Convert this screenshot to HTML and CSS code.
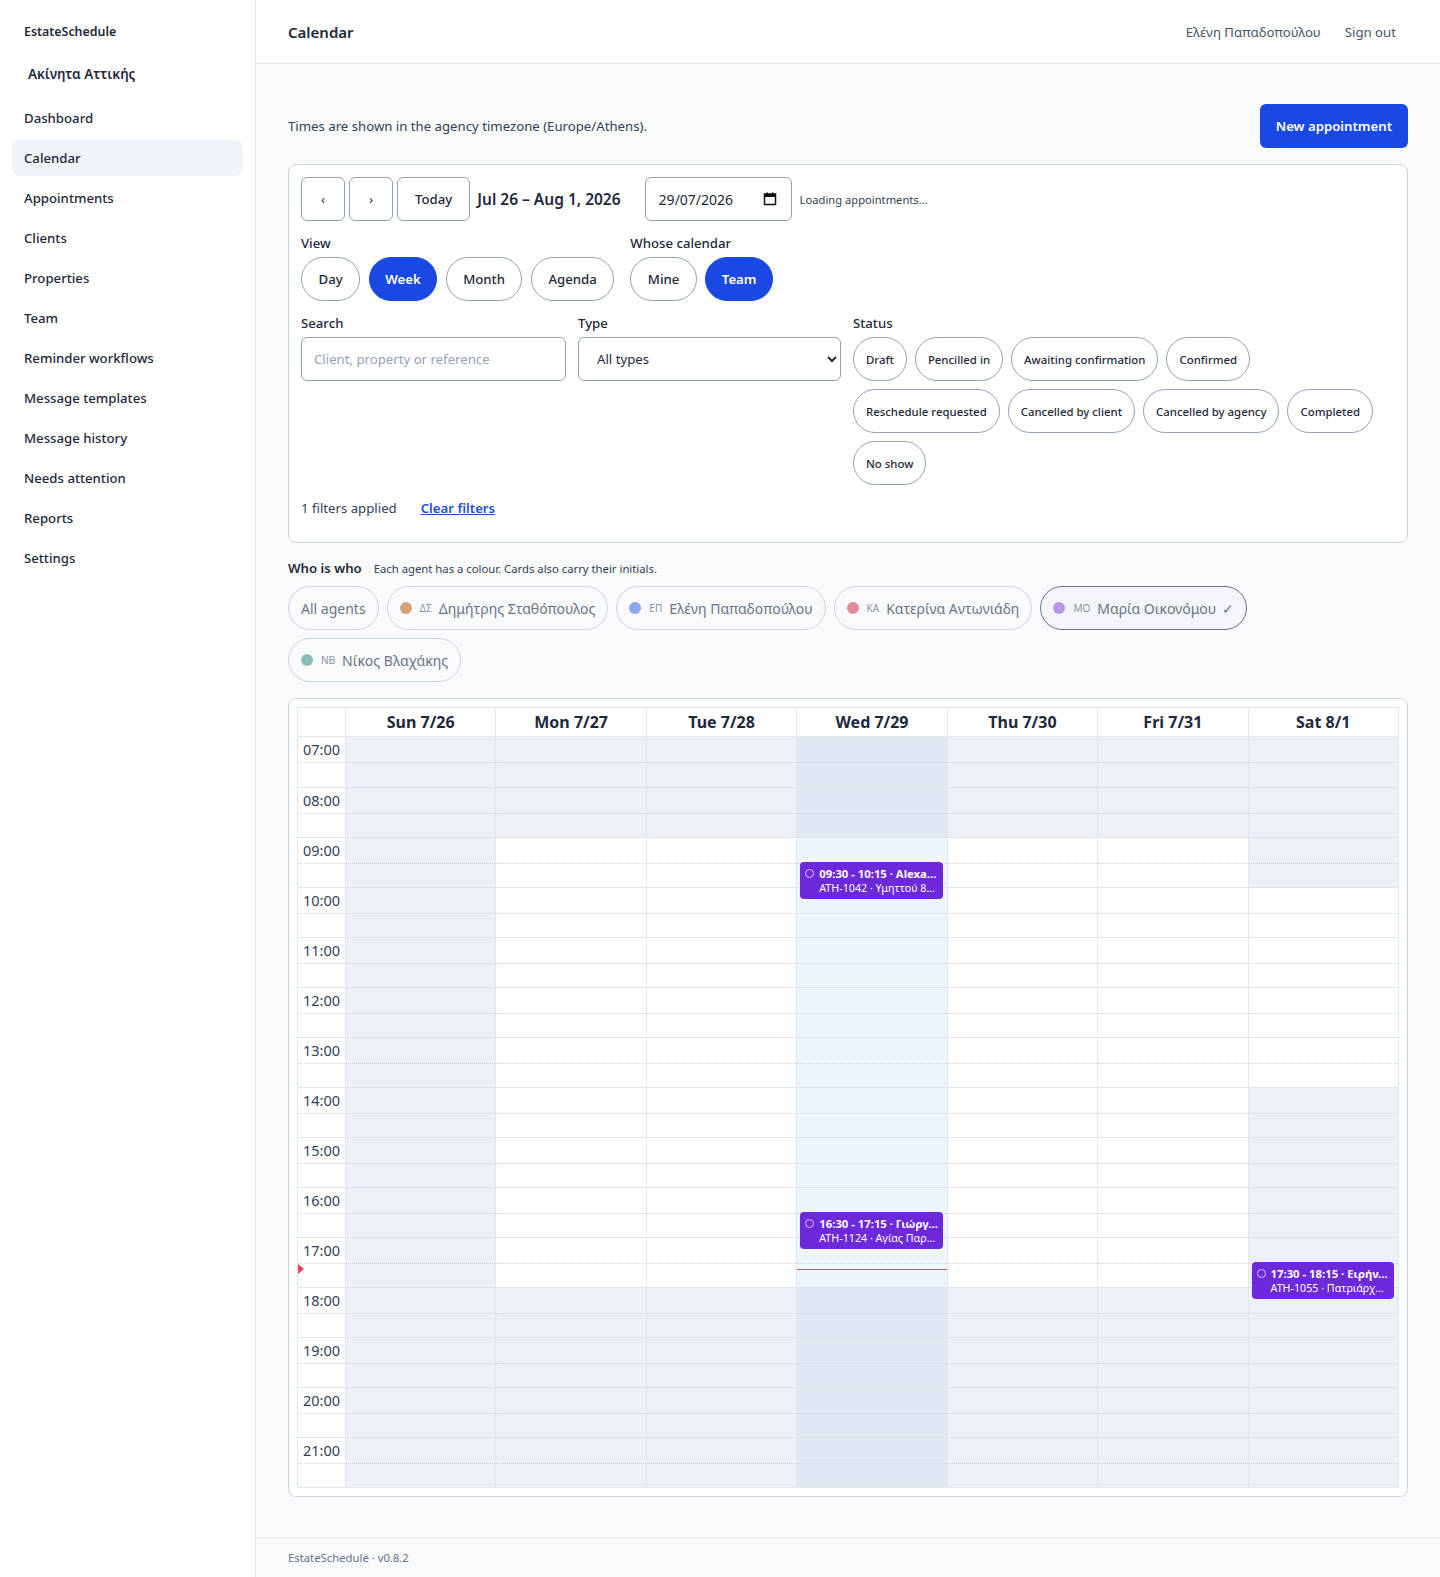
FILE: index.html
```html
<!DOCTYPE html>
<html lang="en">
<head>
    <meta charset="UTF-8">
    <meta name="viewport" content="width=device-width, initial-scale=1.0">
    <title>Calendar · EstateSchedule</title>
    <link rel="stylesheet" href="styles.css">
</head>
<body>

<div class="layout">
    <aside class="sidebar">
        <div class="brand">EstateSchedule</div>
        <div class="agency">Ακίνητα Αττικής</div>
        <nav class="nav">
            <a href="#">Dashboard</a>
            <a href="#" class="active">Calendar</a>
            <a href="#">Appointments</a>
            <a href="#">Clients</a>
            <a href="#">Properties</a>
            <a href="#">Team</a>
            <a href="#">Reminder workflows</a>
            <a href="#">Message templates</a>
            <a href="#">Message history</a>
            <a href="#">Needs attention</a>
            <a href="#">Reports</a>
            <a href="#">Settings</a>
        </nav>
    </aside>

    <div class="main">
        <header class="topbar">
            <h1>Calendar</h1>
            <div class="user">
                <span>Ελένη Παπαδοπούλου</span>
                <a href="#">Sign out</a>
            </div>
        </header>

        <div class="content">
            <div class="intro">
                <p>Times are shown in the agency timezone (Europe/Athens).</p>
                <button class="primary">New appointment</button>
            </div>

            <section class="card filters">
                <div class="toolbar">
                    <button class="btn square">&lsaquo;</button>
                    <button class="btn square">&rsaquo;</button>
                    <button class="btn today">Today</button>
                    <span class="range">Jul 26 – Aug 1, 2026</span>
                    <div class="date-box">
                        <span>29/07/2026</span>
                        <svg width="14" height="14" viewBox="0 0 14 14">
                            <rect x="1.5" y="2" width="11" height="10.5" fill="none" stroke="#111" stroke-width="1.5"/>
                            <rect x="1.5" y="2" width="11" height="3" fill="#111"/>
                            <rect x="3.5" y="0.5" width="1.5" height="2" fill="#111"/>
                            <rect x="9" y="0.5" width="1.5" height="2" fill="#111"/>
                        </svg>
                    </div>
                    <span class="loading">Loading appointments...</span>
                </div>

                <div class="groups">
                    <div class="group">
                        <div class="label">View</div>
                        <div class="chips">
                            <button class="chip">Day</button>
                            <button class="chip on">Week</button>
                            <button class="chip">Month</button>
                            <button class="chip">Agenda</button>
                        </div>
                    </div>
                    <div class="group">
                        <div class="label">Whose calendar</div>
                        <div class="chips">
                            <button class="chip">Mine</button>
                            <button class="chip on">Team</button>
                        </div>
                    </div>
                </div>

                <div class="filter-grid">
                    <div>
                        <div class="label">Search</div>
                        <input class="field" type="text" placeholder="Client, property or reference">
                    </div>
                    <div>
                        <div class="label">Type</div>
                        <select class="field">
                            <option>All types</option>
                        </select>
                    </div>
                    <div>
                        <div class="label">Status</div>
                        <div class="chips small">
                            <button class="chip">Draft</button>
                            <button class="chip">Pencilled in</button>
                            <button class="chip">Awaiting confirmation</button>
                            <button class="chip">Confirmed</button>
                            <button class="chip">Reschedule requested</button>
                            <button class="chip">Cancelled by client</button>
                            <button class="chip">Cancelled by agency</button>
                            <button class="chip">Completed</button>
                            <button class="chip">No show</button>
                        </div>
                    </div>
                </div>

                <div class="applied">
                    <span>1 filters applied</span>
                    <a href="#">Clear filters</a>
                </div>
            </section>

            <div class="legend-head">
                <strong>Who is who</strong>
                <span>Each agent has a colour. Cards also carry their initials.</span>
            </div>
            <div class="agents">
                <button class="agent">All agents</button>
                <button class="agent"><i class="dot" style="background:#d6a27c"></i><small>ΔΣ</small>Δημήτρης Σταθόπουλος</button>
                <button class="agent"><i class="dot" style="background:#8da6ee"></i><small>ΕΠ</small>Ελένη Παπαδοπούλου</button>
                <button class="agent"><i class="dot" style="background:#e08a9c"></i><small>ΚΑ</small>Κατερίνα Αντωνιάδη</button>
                <button class="agent selected"><i class="dot" style="background:#b995ec"></i><small>ΜΟ</small>Μαρία Οικονόμου <span class="check">✓</span></button>
                <button class="agent"><i class="dot" style="background:#88c0b6"></i><small>ΝΒ</small>Νίκος Βλαχάκης</button>
            </div>

            <section class="card cal-card">
                <div class="cal" id="cal"></div>
            </section>
        </div>

        <footer class="footer">EstateSchedule · v0.8.2</footer>
    </div>
</div>

<script src="calendar.js"></script>
</body>
</html>
```

FILE: calendar.js
```js
const HOUR_PX = 50;
const FIRST_HOUR = 7;
const LAST_HOUR = 21;

const days = [
    { label: "Sun 7/26", open: null },
    { label: "Mon 7/27", open: [9, 18] },
    { label: "Tue 7/28", open: [9, 18] },
    { label: "Wed 7/29", open: [9, 18], today: true },
    { label: "Thu 7/30", open: [9, 18] },
    { label: "Fri 7/31", open: [9, 18] },
    { label: "Sat 8/1", open: [10, 14] }
];

const events = [
    { day: 3, start: 9.5, end: 10.25, title: "09:30 - 10:15 · Alexa…", place: "ATH-1042 · Υμηττού 8…" },
    { day: 3, start: 16.5, end: 17.25, title: "16:30 - 17:15 · Γιώργ…", place: "ATH-1124 · Αγίας Παρ…" },
    { day: 6, start: 17.5, end: 18.25, title: "17:30 - 18:15 · Ειρήν…", place: "ATH-1055 · Πατριάρχ…" }
];

const now = { day: 3, hour: 17.63 };

function pad(h) {
    return (h < 10 ? "0" : "") + h + ":00";
}

function topFor(hour) {
    return (hour - FIRST_HOUR) * HOUR_PX;
}

const cal = document.getElementById("cal");

// header row
cal.insertAdjacentHTML("beforeend", '<div class="cal-head"></div>');
days.forEach(d => {
    cal.insertAdjacentHTML("beforeend", '<div class="cal-head">' + d.label + '</div>');
});

// time column
let times = '<div class="times">';
for (let h = FIRST_HOUR; h <= LAST_HOUR; h++) {
    times += '<div class="slot"><span>' + pad(h) + '</span></div>';
}
times += '<i class="now-mark" style="top:' + (topFor(now.hour) - 5) + 'px"></i></div>';
cal.insertAdjacentHTML("beforeend", times);

// day columns
days.forEach((d, i) => {
    let html = '<div class="day' + (d.today ? ' today' : '') + '">';
    for (let h = FIRST_HOUR; h <= LAST_HOUR; h++) {
        const open = d.open && h >= d.open[0] && h < d.open[1];
        html += '<div class="slot' + (open ? ' open' : '') + '"></div>';
    }
    events.filter(e => e.day === i).forEach(e => {
        html += '<div class="event" style="top:' + topFor(e.start) + 'px;height:' + ((e.end - e.start) * HOUR_PX - 1) + 'px">'
            + '<div class="ev-title"><i class="ev-ring"></i>' + e.title + '</div>'
            + '<div class="ev-place">' + e.place + '</div></div>';
    });
    if (now.day === i) {
        html += '<div class="now-line" style="top:' + topFor(now.hour) + 'px"></div>';
    }
    html += '</div>';
    cal.insertAdjacentHTML("beforeend", html);
});
```

FILE: styles.css
```css
* {
    margin: 0;
    padding: 0;
    box-sizing: border-box;
}

body {
    font-family: "Noto Sans", Arial, sans-serif;
    font-size: 13.2px;
    color: #1e293b;
    background: #f8fafc;
}

button, input, select {
    font-family: inherit;
    color: inherit;
}

a {
    color: inherit;
    text-decoration: none;
}

.layout {
    display: flex;
    min-height: 100vh;
}

/* sidebar */
.sidebar {
    width: 256px;
    flex: none;
    background: white;
    border-right: 1px solid #e2e8f0;
    padding: 20px 12px;
}

.brand {
    font-size: 12.4px;
    font-weight: 600;
    line-height: 24px;
    padding: 0 12px;
}

.agency {
    font-size: 13.4px;
    font-weight: 600;
    line-height: 24px;
    padding: 0 16px;
    margin-top: 18px;
}

.nav {
    display: flex;
    flex-direction: column;
    gap: 4px;
    margin-top: 14px;
}

.nav a {
    height: 36px;
    line-height: 36px;
    padding: 0 12px;
    border-radius: 8px;
    font-weight: 500;
}

.nav a.active {
    background: #f0f3f8;
}

/* main */
.main {
    flex: 1;
    display: flex;
    flex-direction: column;
}

.topbar {
    height: 64px;
    background: white;
    border-bottom: 1px solid #e2e8f0;
    display: flex;
    align-items: center;
    justify-content: space-between;
    padding: 0 44px 0 32px;
}

.topbar h1 {
    font-size: 15px;
    font-weight: 600;
}

.user {
    display: flex;
    gap: 24px;
    color: #475569;
}

.content {
    flex: 1;
    padding: 40px 32px 40px 32px;
}

.intro {
    display: flex;
    justify-content: space-between;
    align-items: center;
    color: #334155;
}

.primary {
    height: 44px;
    padding: 0 16px;
    background: #1a48e3;
    color: white;
    border: none;
    border-radius: 6px;
    font-size: 13.2px;
    font-weight: 600;
}

.card {
    background: white;
    border: 1px solid #cbd5e1;
    border-radius: 8px;
}

.filters {
    margin-top: 16px;
    padding: 12px 12px 24px;
}

.toolbar {
    display: flex;
    align-items: center;
    gap: 4px;
}

.btn {
    height: 44px;
    background: white;
    border: 1px solid #94a3b8;
    border-radius: 6px;
    font-size: 13.2px;
}

.btn.square {
    width: 44px;
    font-size: 13px;
}

.btn.today {
    padding: 0 17px;
    font-weight: 500;
}

.range {
    font-size: 15.5px;
    font-weight: 600;
    margin: 0 20px 0 3px;
}

.date-box {
    width: 147px;
    height: 44px;
    border: 1px solid #94a3b8;
    border-radius: 6px;
    padding: 0 14px 0 13px;
    display: flex;
    align-items: center;
    justify-content: space-between;
    font-size: 14px;
}

.loading {
    font-size: 11.2px;
    color: #334155;
    margin-left: 4px;
}

.label {
    font-weight: 500;
    line-height: 20px;
    margin-bottom: 4px;
}

.groups {
    display: flex;
    gap: 16px;
    margin-top: 12px;
}

.chips {
    display: flex;
    flex-wrap: wrap;
    gap: 8.5px;
}

.chip {
    height: 44px;
    padding: 0 16.5px;
    background: white;
    border: 1px solid #94a3b8;
    border-radius: 999px;
    font-size: 13.2px;
    font-weight: 500;
}

.chip.on {
    padding: 0 15.5px;
    background: #1a48e3;
    border-color: #1a48e3;
    color: white;
    font-weight: 600;
}

.chips.small {
    gap: 8px;
}

.chips.small .chip {
    padding: 0 12px;
    font-size: 11.4px;
}

.filter-grid {
    display: grid;
    grid-template-columns: 265px 263px 1fr;
    gap: 12px;
    margin-top: 12px;
}

.field {
    width: 100%;
    height: 44px;
    border: 1px solid #94a3b8;
    border-radius: 6px;
    background: white;
    padding: 0 12px;
    font-size: 13.2px;
}

.field::placeholder {
    color: #94a3b8;
}

select.field {
    padding: 0 8px 0 14px;
}

.applied {
    margin-top: 13px;
    display: flex;
    gap: 24px;
    line-height: 20px;
    color: #334155;
}

.applied a {
    color: #1d4ed8;
    font-weight: 600;
    text-decoration: underline;
}

/* who is who */
.legend-head {
    margin-top: 15px;
    display: flex;
    align-items: center;
    gap: 12px;
    height: 20px;
}

.legend-head strong {
    font-weight: 600;
}

.legend-head span {
    font-size: 11.3px;
    color: #334155;
}

.agents {
    margin-top: 8px;
    display: flex;
    flex-wrap: wrap;
    gap: 8px;
}

.agent {
    height: 44px;
    padding: 0 12px;
    display: flex;
    align-items: center;
    background: transparent;
    border: 1px solid #cbd5e1;
    border-radius: 999px;
    font-size: 14px;
    color: #6b7585;
}

.agent .dot {
    width: 12px;
    height: 12px;
    border-radius: 50%;
    margin-right: 8px;
}

.agent small {
    font-size: 10px;
    color: #8a93a3;
    margin-right: 7px;
}

.agent.selected {
    border-color: #6b7585;
    background: #f3f5f8;
}

.check {
    margin-left: 6px;
}

/* calendar */
.cal-card {
    margin-top: 16px;
    padding: 8px;
}

.cal {
    display: grid;
    grid-template-columns: 47px repeat(7, 1fr);
    border: 1px solid #e2e8f0;
}

.cal-head {
    height: 29px;
    line-height: 28px;
    text-align: center;
    font-size: 16px;
    font-weight: 700;
    border-left: 1px solid #e2e8f0;
    border-bottom: 1px solid #e2e8f0;
}

.cal-head:first-child {
    border-left: none;
}

.times,
.day {
    position: relative;
}

.day {
    border-left: 1px solid #e2e8f0;
}

.slot {
    position: relative;
    height: 50px;
    border-top: 1px solid #dfe5ec;
    background: #edf0f4;
}

.slot:first-child {
    border-top: none;
}

.slot::after {
    content: "";
    position: absolute;
    left: 0;
    right: 0;
    top: 50%;
    border-top: 1px dotted #cfd6df;
}

.slot.open {
    background: white;
}

.today .slot {
    background: #e1e7f3;
}

.today .slot.open {
    background: #eef5ff;
}

.times .slot {
    background: white;
}

.times span {
    display: block;
    padding: 2px 0 0 5px;
    font-size: 14.5px;
    line-height: 20px;
    color: #334155;
}

.now-mark {
    position: absolute;
    left: 0;
    width: 0;
    height: 0;
    border-top: 5px solid transparent;
    border-bottom: 5px solid transparent;
    border-left: 6px solid #f43f5e;
}

.now-line {
    position: absolute;
    left: 0;
    right: 0;
    height: 1px;
    background: #f43f5e;
}

.event {
    position: absolute;
    left: 3px;
    right: 4px;
    background: #6d28d9;
    color: white;
    border-radius: 4px;
    padding: 4px 6px 0 5px;
    overflow: hidden;
    white-space: nowrap;
    z-index: 1;
}

.ev-title {
    font-size: 11.3px;
    font-weight: 700;
    line-height: 15px;
    display: flex;
    align-items: center;
}

.ev-ring {
    flex: none;
    width: 9px;
    height: 9px;
    border: 1px solid rgba(255, 255, 255, 0.7);
    border-radius: 50%;
    margin-right: 5px;
}

.ev-place {
    font-size: 10.7px;
    line-height: 14px;
    padding-left: 14px;
}

.footer {
    border-top: 1px solid #e2e8f0;
    padding: 12px 32px;
    font-size: 11.3px;
    line-height: 16px;
    color: #64748b;
}
```
